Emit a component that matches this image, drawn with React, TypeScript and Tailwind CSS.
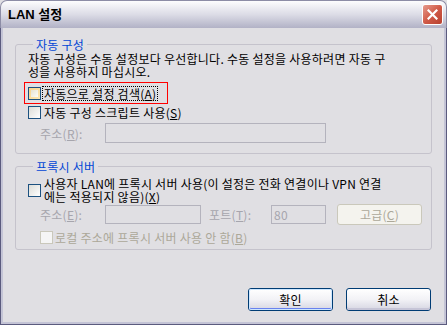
import React from "react";

type BoxState = "normal" | "hover" | "disabled";

function Box({ state }: { state: BoxState }) {
  if (state === "disabled") {
    return <span className="block w-[13px] h-[13px] shrink-0 border border-[#cac8bb] bg-[#f5f5f5]" />;
  }
  if (state === "hover") {
    return (
      <span className="block w-[13px] h-[13px] shrink-0 border border-[#1c5180] bg-gradient-to-br from-[#f9d48a] to-[#fbe7b5] p-[2px]">
        <span className="block w-full h-full bg-gradient-to-br from-[#e6e2d2] to-[#fcfcf8]" />
      </span>
    );
  }
  return <span className="block w-[13px] h-[13px] shrink-0 border border-[#1c5180] bg-gradient-to-br from-[#dcdcd7] to-[#ffffff]" />;
}

function XPButton({ children, def }: { children: React.ReactNode; def?: boolean }) {
  return (
    <div className="w-[85px] h-[23px] rounded-[3px] border border-[#003c74] bg-gradient-to-b from-[#ffffff] via-[#f2f2f6] to-[#d6d6e2] flex items-center justify-center">
      <div
        className={
          def
            ? "w-full h-full rounded-[2px] shadow-[inset_0_0_0_1px_#cee7ff,inset_0_-2px_0_0_#6982ee] flex items-center justify-center"
            : "w-full h-full rounded-[2px] shadow-[inset_0_-2px_0_0_#c6c5d7] flex items-center justify-center"
        }
      >
        {children}
      </div>
    </div>
  );
}

export default function App() {
  return (
    <div className="w-[447px] h-[325px] flex flex-col bg-[#e0dfe3] text-[12px] leading-[13px] tracking-[0.25px] text-black font-['Noto_Sans_CJK_KR','Noto_Sans',sans-serif] overflow-hidden">
      {/* Title bar */}
      <div className="h-[28px] shrink-0 rounded-t-[7px] border-t border-x border-[#8d8da6] bg-gradient-to-b from-[#fdfdfe] via-[#dcdce6] to-[#b2b2c6] flex items-center justify-between pl-[7px] pr-[3px]">
        <span className="text-[13px] tracking-normal font-bold font-['Liberation_Sans','Noto_Sans_CJK_KR',sans-serif] text-black">LAN 설정</span>
        <div className="w-[21px] h-[21px] rounded-[3px] border border-white bg-gradient-to-br from-[#e59a8c] via-[#d05a48] to-[#b8412f] flex items-center justify-center">
          <svg width="11" height="11" viewBox="0 0 11 11">
            <path d="M1.5 1.5 L9.5 9.5 M9.5 1.5 L1.5 9.5" stroke="white" strokeWidth="2.2" strokeLinecap="square" />
          </svg>
        </div>
      </div>

      {/* Client area */}
      <div className="flex-1 flex flex-col border-x border-b border-[#5b5b7e] shadow-[inset_2px_0_0_#c4c4d6,inset_-2px_0_0_#c4c4d6,inset_0_-2px_0_#c4c4d6] px-[14px]">
        {/* Group 1 */}
        <fieldset className="mt-[10px] border border-[#c5c3cc] rounded-[3px] pl-[12px] pr-[8px] pb-[10px]">
          <legend className="ml-[5px] px-[3px] text-[#0046d5]">자동 구성</legend>
          <div className="pt-[1px]">
            자동 구성은 수동 설정보다 우선합니다. 수동 설정을 사용하려면 자동 구<br />
            성을 사용하지 마십시오.
          </div>
          <div className="mt-[4px] ml-[-4px] w-[144px] h-[22px] border border-[#ff0000] flex items-center pl-[3px]">
            <Box state="hover" />
            <span className="ml-[2px] px-[1px] outline-1 outline-dotted outline-black">
              자동으로 설정 검색(<u>A</u>)
            </span>
          </div>
          <div className="h-[16px] flex items-center">
            <Box state="normal" />
            <span className="ml-[3px]">
              자동 구성 스크립트 사용(<u>S</u>)
            </span>
          </div>
          <div className="mt-[3px] flex items-center">
            <span className="ml-[12px] w-[65px] text-[#a6a5ad]">
              주소(<u>R</u>):
            </span>
            <div className="w-[221px] h-[20px] border border-[#b4b3bd] bg-[#e0dfe3]" />
          </div>
        </fieldset>

        {/* Group 2 */}
        <fieldset className="mt-[6px] border border-[#c5c3cc] rounded-[3px] pl-[12px] pr-[8px] pb-[4px]">
          <legend className="ml-[5px] px-[3px] text-[#0046d5]">프록시 서버</legend>
          <div className="pt-[4px] flex items-center">
            <Box state="normal" />
            <span className="ml-[3px]">
              사용자 LAN에 프록시 서버 사용(이 설정은 전화 연결이나 VPN 연결<br />
              에는 적용되지 않음)(<u>X</u>)
            </span>
          </div>
          <div className="mt-[1px] flex items-center h-[20px]">
            <span className="ml-[12px] w-[65px] text-[#a6a5ad]">
              주소(<u>E</u>):
            </span>
            <div className="w-[96px] h-[19px] border border-[#b4b3bd] bg-[#e0dfe3]" />
            <span className="ml-[8px] w-[62px] text-[#a6a5ad]">
              포트(<u>T</u>):
            </span>
            <div className="w-[55px] h-[19px] border border-[#b4b3bd] bg-[#e0dfe3] pl-[2px] flex items-center text-[#a6a5ad]">
              80
            </div>
            <div className="ml-[11px] w-[85px] h-[21px] rounded-[3px] border border-[#cac8bb] bg-[#f4f3ee] flex items-center justify-center text-[#aca899]">
              고급(<u>C</u>)
            </div>
          </div>
          <div className="mt-[5px] h-[16px] flex items-center pl-[12px]">
            <Box state="disabled" />
            <span className="ml-[2px] text-[#aca899]">
              로컬 주소에 프록시 서버 사용 안 함(<u>B</u>)
            </span>
          </div>
        </fieldset>

        {/* Buttons */}
        <div className="mt-[38px] flex justify-end gap-[13px] pr-[1px]">
          <XPButton def>확인</XPButton>
          <XPButton>취소</XPButton>
        </div>
      </div>
    </div>
  );
}
